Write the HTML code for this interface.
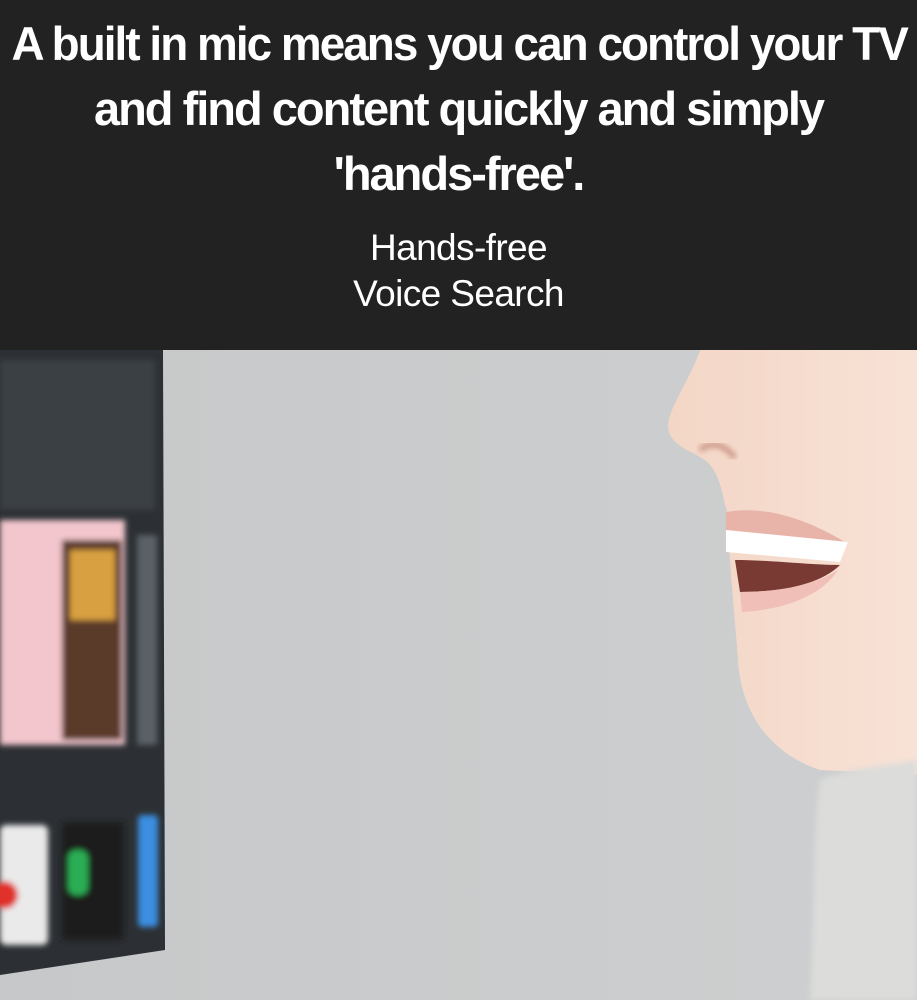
<!DOCTYPE html>
<html><head><meta charset="utf-8"><style>
html,body{margin:0;padding:0;width:917px;height:1000px;overflow:hidden;background:#c9cbcc;font-family:"Liberation Sans",sans-serif}
.top{position:absolute;left:0;top:0;width:917px;height:350px;background:#222222;color:#fff;text-align:center}
.h{position:absolute;left:0;width:917px;font-weight:bold;font-size:47px;letter-spacing:-2px;line-height:1;white-space:nowrap}
.s{position:absolute;left:0;width:917px;font-size:37px;letter-spacing:-0.6px;line-height:1}
</style></head><body>
<div class="top">
<div class="h" style="top:20px;transform:scaleX(.975)">A built in mic means you can control your TV</div>
<div class="h" style="top:85px">and find content quickly and simply</div>
<div class="h" style="top:150px">'hands-free'.</div>
<div class="s" style="top:229px">Hands-free</div>
<div class="s" style="top:275px">Voice Search</div>
</div>
<svg style="position:absolute;left:0;top:350px" width="917" height="650" viewBox="0 350 917 650">
<defs>
<linearGradient id="bg" x1="0" x2="1"><stop offset="0" stop-color="#c6c8c9"/><stop offset="1" stop-color="#cdcfd0"/></linearGradient>
<linearGradient id="skin" x1="0" x2="1"><stop offset="0" stop-color="#f3d6c6"/><stop offset="1" stop-color="#f8e2d6"/></linearGradient>
<filter id="b"><feGaussianBlur stdDeviation="3"/></filter>
</defs>
<rect x="0" y="350" width="917" height="650" fill="url(#bg)"/>
<polygon points="0,350 163,350 165,950 0,975" fill="#2c3034"/>
<g filter="url(#b)">
<rect x="0" y="360" width="155" height="150" fill="#3a3f44"/>
<rect x="0" y="520" width="125" height="225" fill="#f2c6cc"/>
<rect x="62" y="540" width="60" height="200" fill="#5a3a2a"/>
<rect x="70" y="550" width="45" height="70" fill="#d8a040"/>
<rect x="137" y="535" width="20" height="210" fill="#5a6066"/>
<rect x="0" y="825" width="48" height="120" rx="6" fill="#eaeaea"/>
<circle cx="4" cy="895" r="14" fill="#e0302a"/>
<rect x="62" y="822" width="62" height="118" fill="#1a1c1c"/>
<rect x="68" y="850" width="20" height="45" rx="8" fill="#2cae55"/>
<rect x="138" y="815" width="20" height="112" rx="4" fill="#3a8ee0"/>
</g>
<path d="M700,350 C690,380 670,405 668,425 C668,445 690,450 705,460 C718,470 722,490 725,505 C730,515 728,535 730,560 C732,590 735,620 738,660 C740,700 760,750 820,770 L917,775 L917,350 Z" fill="url(#skin)"/>
<path d="M700,450 C712,440 725,445 735,458" stroke="#c89080" stroke-width="5" fill="none" filter="url(#b)"/>
<path d="M726,512 C760,506 800,515 845,542 L840,552 C800,545 760,540 726,540 Z" fill="#e8b4aa"/>
<path d="M726,530 L848,542 L840,562 L726,552 Z" fill="#ffffff"/>
<path d="M735,560 C770,560 810,565 840,565 C820,585 780,592 740,592 Z" fill="#7a3a34"/>
<path d="M740,592 C780,592 815,585 838,570 C820,598 780,610 742,612 Z" fill="#f0c0b8"/>
<path d="M820,780 C860,765 900,765 917,760 L917,1000 L810,1000 C815,920 812,840 820,780 Z" fill="#dcdcda" filter="url(#b)"/>
</svg>
</body></html>
